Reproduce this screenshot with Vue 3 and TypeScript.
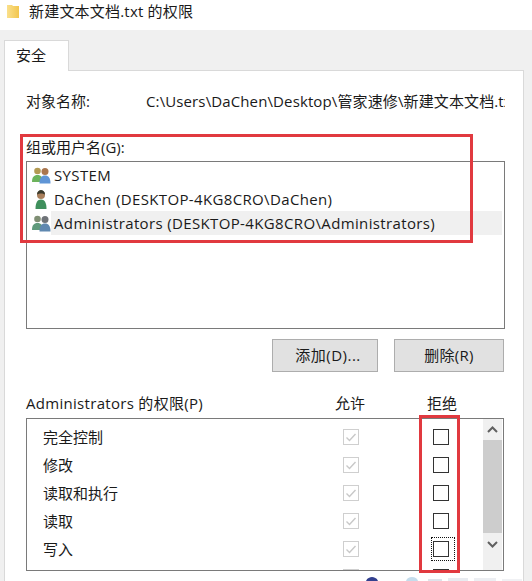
<script setup lang="ts">
type Account = { name: string; kind: "group" | "user"; selected?: boolean };

const accounts: Account[] = [
  { name: "SYSTEM", kind: "group" },
  { name: "DaChen (DESKTOP-4KG8CRO\\DaChen)", kind: "user" },
  { name: "Administrators (DESKTOP-4KG8CRO\\Administrators)", kind: "group", selected: true },
];

const permissions = ["完全控制", "修改", "读取和执行", "读取", "写入", ""];
</script>

<template>
  <div class="dialog">
    <header class="titlebar">
      <svg class="folder" width="12" height="14" viewBox="0 0 12 14">
        <defs>
          <linearGradient id="folderFill" x1="0" y1="0" x2="1" y2="0">
            <stop offset="0" stop-color="#fae08c" />
            <stop offset="1" stop-color="#f2c64e" />
          </linearGradient>
        </defs>
        <path d="M0 1h5l1 1h6v12H0z" fill="url(#folderFill)" />
      </svg>
      <span class="title-text">新建文本文档.txt 的权限</span>
    </header>

    <div class="tabs">
      <div class="tab">安全</div>
    </div>

    <main class="panel">
      <div class="object-row">
        <span class="object-label">对象名称:</span>
        <span class="object-path">C:\Users\DaChen\Desktop\管家速修\新建文本文档.txt</span>
      </div>

      <div class="group-label">组或用户名(G):</div>
      <div class="account-list">
        <div v-for="a in accounts" :key="a.name" class="account">
          <svg v-if="a.kind === 'group'" class="account-icon" width="19" height="17" viewBox="0 0 19 17">
            <circle cx="5.500" cy="4" r="3.300" :fill="a.selected ? '#7f8f74' : '#b39a52'" />
            <path d="M0 15c0-5 2-7 5.500-7S11 10 11 15z" :fill="a.selected ? '#5f9a7c' : '#6cb35c'" />
            <circle cx="13" cy="4.500" r="3.500" :fill="a.selected ? '#6f7378' : '#a9764e'" />
            <path d="M7.500 16.500c0-5.500 2-8 5.500-8s5.500 2.500 5.500 8z" :fill="a.selected ? '#5f88b0' : '#5f95d6'" />
          </svg>
          <svg v-else class="account-icon" width="19" height="19" viewBox="0 0 19 19">
            <circle cx="9" cy="5" r="4" fill="#a97f5c" />
            <path d="M5 4.500C5 1.500 7 0 9 0s4 1.500 4 4.500c-2-1.500-6-1.500-8 0z" fill="#3a3a2c" />
            <path d="M3.500 19c0-6.500 2-9.500 5.500-9.500s5.500 3 5.500 9.500z" fill="#3f8f5c" />
          </svg>
          <span class="account-name" :class="{ selected: a.selected }">{{ a.name }}</span>
        </div>
      </div>

      <div class="buttons">
        <button class="add">添加(D)...</button>
        <button class="remove">删除(R)</button>
      </div>

      <div class="perm-head">
        <span class="perm-title">Administrators 的权限(P)</span>
        <span class="head-allow">允许</span>
        <span class="head-deny">拒绝</span>
      </div>
      <div class="perm-box">
        <div class="perm-rows">
          <div v-for="(p, i) in permissions" :key="i" class="perm-row">
            <span class="perm-name">{{ p }}</span>
            <span class="cell">
              <span class="check disabled">
                <svg width="14" height="14" viewBox="0 0 14 14">
                  <path d="M2.500 7.500l3 3 6-6.500" fill="none" stroke="#c8c8c8" stroke-width="1.400" />
                </svg>
              </span>
            </span>
            <span class="cell deny">
              <span class="check" :class="{ focused: i === 4 }"></span>
            </span>
          </div>
        </div>
        <div class="scrollbar">
          <svg class="arrow" width="19" height="21" viewBox="0 0 19 21">
            <path d="M5 13l4.500-4.500L14 13" fill="none" stroke="#606060" stroke-width="2" />
          </svg>
          <div class="thumb"></div>
          <svg class="arrow" width="19" height="21" viewBox="0 0 19 21">
            <path d="M5 9l4.500 4.500L14 9" fill="none" stroke="#606060" stroke-width="2" />
          </svg>
        </div>
      </div>
    </main>

    <!-- red annotations drawn on top of the screenshot -->
    <div class="mark mark-group"></div>
    <div class="mark mark-deny"></div>

    <!-- clipped watermark at the bottom edge -->
    <svg class="watermark" width="192" height="5" viewBox="0 0 192 5">
      <path d="M26 5c1-3 4-4 6-4s5 1 6 4z" fill="#33408f" />
      <path d="M66 5c1-3 3-4 6-4s5 1 6 4z" fill="#c4dcec" />
      <rect x="88" y="3" width="14" height="2" fill="#dfe3ea" />
      <rect x="108" y="2" width="20" height="3" fill="#e8ebf0" />
      <rect x="134" y="2" width="22" height="3" fill="#eceef2" />
      <rect x="162" y="3" width="20" height="2" fill="#f0f1f4" />
    </svg>
  </div>
</template>

<style scoped>
.dialog {
  position: relative;
  width: 532px;
  height: 581px;
  overflow: hidden;
  display: flex;
  flex-direction: column;
  background: #f0f0f0;
  color: #1a1a1a;
  font-family: "Open Sans", "Noto Sans CJK SC", sans-serif;
  font-size: 15px;
}

.titlebar {
  height: 30px;
  display: flex;
  align-items: center;
  padding: 0 0 9px 7px;
  box-sizing: border-box;
  background: #fff;
  flex-shrink: 0;
}

.title-text {
  letter-spacing: 0.2px;
}

.folder {
  margin-right: 10px;
}

.tabs {
  height: 40px;
  padding: 10px 0 0 4px;
  box-sizing: border-box;
  flex-shrink: 0;
}

.tab {
  width: 65px;
  height: 31px;
  box-sizing: border-box;
  padding: 3px 0 0 11px;
  background: #fff;
  border: 1px solid #d9d9d9;
  border-bottom: none;
  position: relative;
  z-index: 1;
}

.panel {
  margin-left: 4px;
  width: 520px;
  flex: 1;
  box-sizing: border-box;
  padding: 21px 0 0 21px;
  background: #fff;
  border-top: 1px solid #d9d9d9;
  border-left: 1px solid #d9d9d9;
  border-right: 1px solid #d9d9d9;
}

.object-row {
  height: 18px;
  line-height: 18px;
  display: flex;
  white-space: nowrap;
  overflow: hidden;
  width: 479px;
}

.object-label {
  width: 120px;
  flex-shrink: 0;
}

.object-path {
  letter-spacing: 0.12px;
}

.group-label {
  margin-top: 28px;
  height: 18px;
  line-height: 18px;
}

.account-list {
  margin-top: 5px;
  width: 479px;
  height: 168px;
  box-sizing: border-box;
  border: 1px solid #7a7a7a;
  padding: 1px 2px 0 2px;
}

.account {
  height: 24px;
  display: flex;
  align-items: center;
  position: relative;
}

.account-icon {
  width: 19px;
  margin-left: 3px;
  flex-shrink: 0;
}

.account-name {
  flex: 1;
  height: 24px;
  line-height: 24px;
  padding-left: 3px;
  letter-spacing: 0.36px;
  white-space: nowrap;
}

.account-name.selected {
  background: #f0f0f0;
}

.buttons {
  margin-top: 10px;
  display: flex;
  width: 478px;
  justify-content: flex-end;
  gap: 16px;
}

button {
  height: 33px;
  box-sizing: border-box;
  background: #e1e1e1;
  border: 1px solid #adadad;
  font: inherit;
  color: inherit;
  padding: 0 0 2px;
  letter-spacing: 0.3px;
}

.add {
  width: 106px;
  padding-left: 6px;
  letter-spacing: 0.5px;
}

.remove {
  width: 110px;
}

.perm-head {
  margin-top: 23px;
  height: 18px;
  line-height: 16px;
  display: flex;
  white-space: nowrap;
}

.perm-title {
  width: 308px;
  letter-spacing: 0.3px;
}

.head-allow {
  width: 32px;
  text-align: center;
}

.head-deny {
  width: 32px;
  margin-left: 60px;
  text-align: center;
}

.perm-box {
  margin-top: 5px;
  width: 478px;
  height: 153px;
  box-sizing: border-box;
  border: 1px solid #7a7a7a;
  display: flex;
  overflow: hidden;
}

.perm-rows {
  flex: 1;
  padding-top: 4px;
  overflow: hidden;
}

.perm-row {
  height: 28px;
  display: flex;
  align-items: center;
}

.perm-name {
  width: 304px;
  padding: 0 0 2px 16px;
  box-sizing: border-box;
}

.cell {
  width: 40px;
  display: flex;
  justify-content: center;
}

.cell.deny {
  margin-left: 50px;
}

.check {
  width: 16px;
  height: 16px;
  box-sizing: border-box;
  border: 1px solid #333;
  position: relative;
  display: block;
}

.check.disabled {
  border-color: #cfcfcf;
}

.check.disabled svg {
  display: block;
  margin: 0;
}

.check.focused::after {
  content: "";
  position: absolute;
  top: -5px;
  bottom: -5px;
  left: -3px;
  right: -7px;
  border: 1px dotted #111;
}

.scrollbar {
  width: 19px;
  background: #f0f0f0;
  display: flex;
  flex-direction: column;
  flex-shrink: 0;
  margin-right: 1px;
}

.arrow {
  flex-shrink: 0;
  display: block;
}

.thumb {
  height: 93px;
  background: #cdcdcd;
  flex-shrink: 0;
}

.mark {
  position: absolute;
  box-sizing: border-box;
  border: 3px solid #e1393f;
  pointer-events: none;
}

.mark-group {
  left: 20px;
  top: 134px;
  width: 453px;
  height: 109px;
}

.mark-deny {
  left: 419px;
  top: 415px;
  width: 41px;
  height: 158px;
}

.watermark {
  position: absolute;
  left: 340px;
  bottom: 0;
}
</style>
